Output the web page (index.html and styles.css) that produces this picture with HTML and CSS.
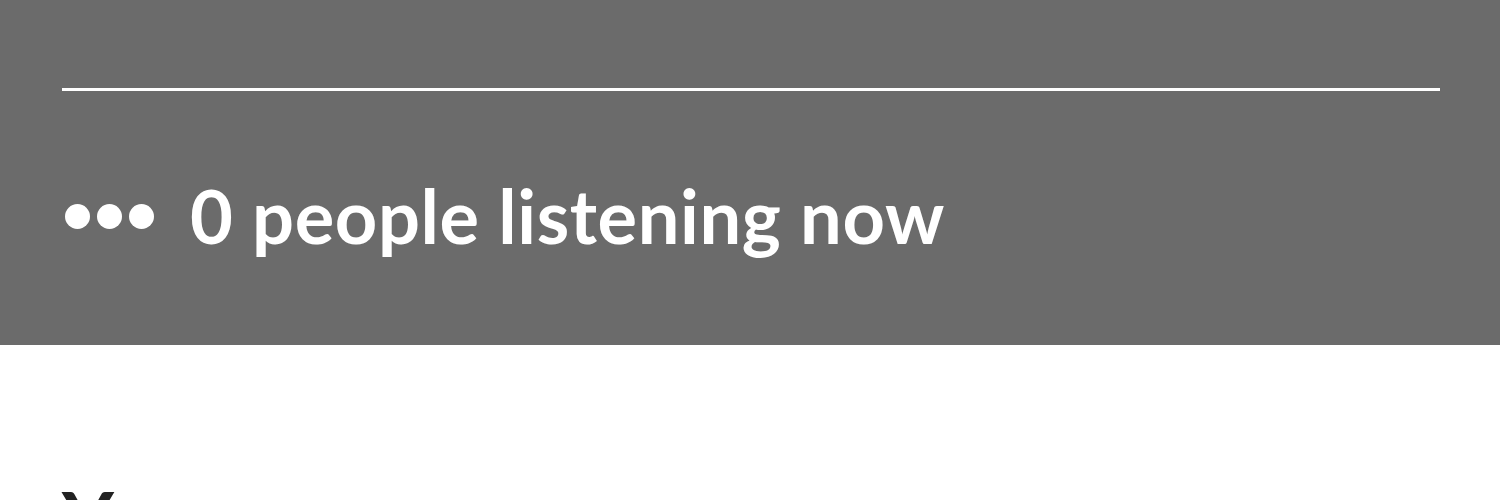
FILE: index.html
```html
<!DOCTYPE html>
<html>
<head>
<meta charset="utf-8">
<link rel="stylesheet" href="styles.css">
</head>
<body>
<section class="banner">
  <div class="rule"></div>
  <div class="listeners">
    <span class="dots"><i></i><i></i><i></i></span>
    <span class="count">0 people listening now</span>
  </div>
</section>
<section class="content">
  <h2 class="title">Your</h2>
</section>
</body>
</html>
```

FILE: styles.css
```css
html, body {
  margin: 0;
  padding: 0;
  background: #ffffff;
  overflow: hidden;
}
body {
  font-family: Lato, "Noto Sans", sans-serif;
}
.banner {
  background: #6b6b6b;
  height: 345px;
  padding: 88px 60px 0 62px;
  box-sizing: border-box;
}
.rule {
  height: 3px;
  background: #ffffff;
}
.listeners {
  display: flex;
  align-items: center;
  margin-top: 88px;
  color: #ffffff;
}
.dots {
  display: flex;
  gap: 7px;
  margin-left: 3px;
  margin-right: 36px;
}
.dots i {
  display: block;
  width: 25px;
  height: 25px;
  border-radius: 50%;
  background: #ffffff;
}
.count {
  font-size: 74px;
  font-weight: 700;
  line-height: 1;
  letter-spacing: 0.6px;
}
.content {
  padding: 134px 62px 0;
}
.title {
  margin: 0;
  font-size: 80px;
  font-weight: 700;
  color: #222222;
  line-height: 1;
}
```
